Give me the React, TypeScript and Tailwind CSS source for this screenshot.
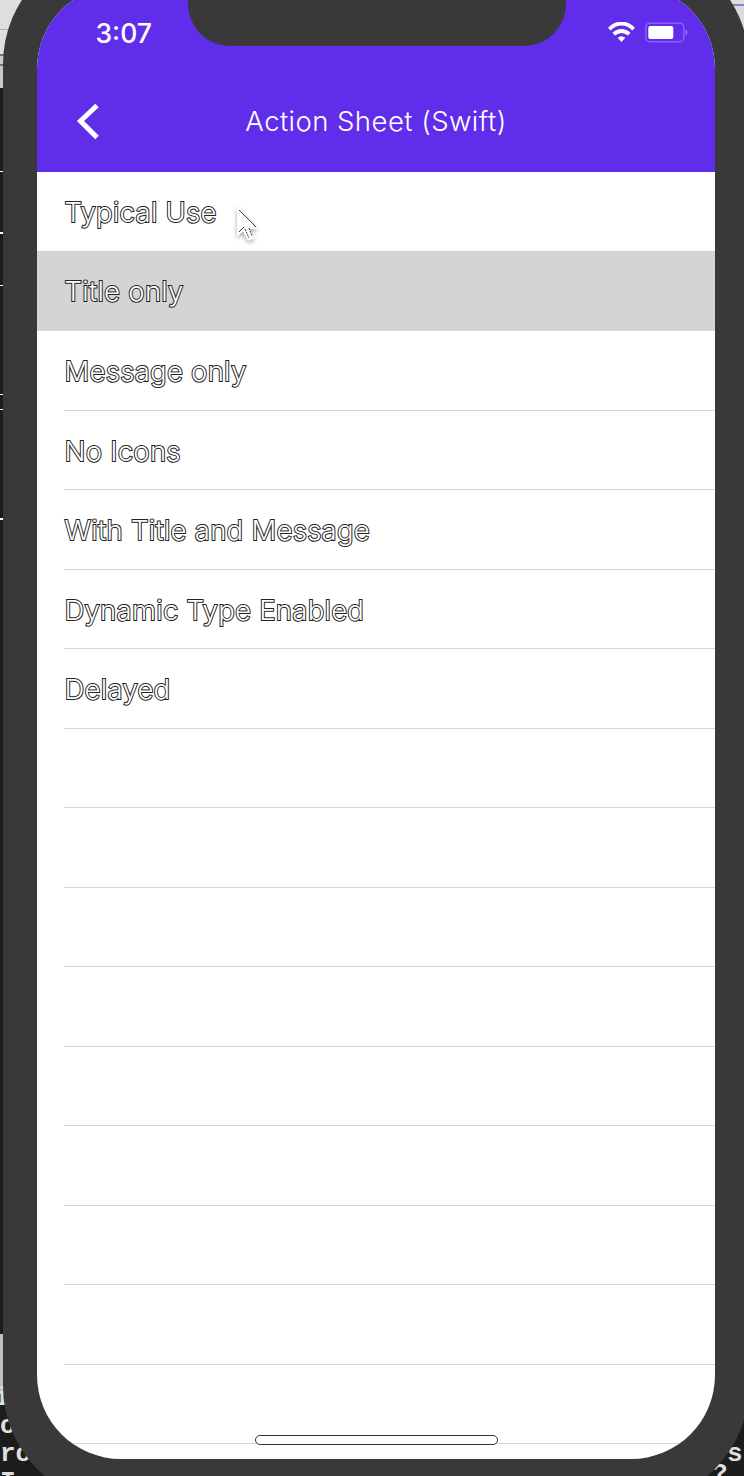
const rows = [
  'Typical Use',
  'Title only',
  'Message only',
  'No Icons',
  'With Title and Message',
  'Dynamic Type Enabled',
  'Delayed',
  '', '', '', '', '', '', '', '', '',
];

const rowClass = (i: number) => {
  if (i === 0) return 'h-[79px] pl-[27px]';
  if (i === 1) return 'h-[80px] bg-[#d4d4d4] pl-[27px]';
  return 'h-[79.5px] pl-[27px]';
};

function StatusBar() {
  return (
    <div className="flex h-[71px] items-start justify-between pl-[58.5px] pr-[27px]">
      <span className="pt-[18px] text-[26.5px] leading-[30px] font-medium text-white">3:07</span>
      <div className="flex items-start gap-[10px] pt-[22px]">
        <svg width="27" height="21" viewBox="0 0 27 21" fill="none" stroke="#fff" strokeWidth="3.8">
          <path d="M1.4 7.2C8-.3 19-.3 25.6 7.2" />
          <path d="M5.8 12.2C10.300 7.9 16.700 7.9 21.200 12.2" />
          <path d="M9.700 15.800Q13.500 12.500 17.300 15.800L13.500 20Z" fill="#fff" stroke="none" />
        </svg>
        <svg width="43" height="21" viewBox="0 0 43 21">
          <rect x=".8" y="1.200" width="38" height="18.500" rx="4" fill="none" stroke="#8f5bf6" strokeWidth="1.500" />
          <rect x="3.300" y="4" width="25" height="13" rx="2" fill="#fff" />
          <path d="M41 8q2 2.500 0 5z" fill="#9b6cf7" stroke="#9b6cf7" />
        </svg>
      </div>
    </div>
  );
}

function NavBar() {
  return (
    <div className="grid h-[101px] grid-cols-[100px_1fr_100px] pt-[30px]">
      <svg className="ml-[39px]" width="24" height="40" viewBox="0 0 24 40" fill="none" stroke="#fff" strokeWidth="5">
        <path d="M21 4.500 4.500 20 21 36.500" />
      </svg>
      <h1 className="text-center text-[27.5px] leading-[40px] font-light tracking-[0.45px] text-white">Action Sheet (Swift)</h1>
    </div>
  );
}

export default function App() {
  return (
    <div className="relative h-[1476px] w-[744px] overflow-hidden bg-[#1c1c1d] font-['Inter','Liberation_Sans',sans-serif]">
      <div className="flex h-full justify-between">
        <div className="flex w-[40px] flex-col *:shrink-0">
          <div className="h-[29px] bg-[#dedede]" />
          <div className="h-px bg-[#b0b0b0]" />
          <div className="h-[24px] bg-[#e0e0e0]" />
          <div className="h-[2px] bg-[#777]" />
          <div className="h-[8px] bg-[#ccc]" />
          <div className="h-[2px] bg-[#777]" />
          <div className="h-[22px] bg-[#c8c8c8]" />
          <div className="mt-[83px] h-px bg-white" />
          <div className="mt-[60px] h-[2px] bg-white" />
          <div className="mt-[51px] h-px bg-white" />
          <div className="mt-[108px] h-px bg-white" />
          <div className="mt-[14px] h-px bg-white" />
          <div className="mt-[108px] h-[2px] bg-white" />
          <div className="mt-[814px] h-[60px] bg-[#bfbfbf]" />
          <div className="-mt-[10px] font-['Liberation_Mono',monospace] text-[26px] leading-[28px] font-bold text-[#dedede]">
            <div className="-ml-1.5">i</div>
            <div>o</div>
            <div>ro</div>
            <div>I</div>
          </div>
        </div>
        <div className="flex w-[40px] flex-col *:shrink-0">
          <div className="h-[4px] bg-[#dedede]" />
          <div className="h-[2px] bg-[#8f7fd0]" />
          <div className="h-[24px] bg-[#dcdcdc]" />
          <div className="mt-[1410px] pl-[23px] font-['Liberation_Mono',monospace] text-[26px] leading-[28px] font-bold text-[#dedede]">
            <div>s</div>
            <div className="-mt-2 -ml-[15px]">?</div>
          </div>
        </div>
      </div>

      <div className="absolute -top-[54px] left-[3px] flex h-[1558px] w-[746px] rounded-[118px] bg-[#39393a] pt-[39px] pr-[34px] pb-[45px] pl-[34px]">
        <div className="relative flex flex-1 flex-col overflow-hidden rounded-[84px] bg-white">
          <header className="bg-[#602eea] pt-[15px]">
            <StatusBar />
            <NavBar />
          </header>
          <ul className="flex flex-col">
            {rows.map((label, i) => (
              <li key={i} className={rowClass(i)}>
                <div className={i < 2 ? 'h-full' : 'h-full border-b border-[#d5d5d7]'}>
                  <span className="block pl-[0.5px] text-[27.5px] leading-[80px] font-light tracking-[0.27px] whitespace-nowrap text-white [paint-order:stroke_fill] [-webkit-text-stroke:2px_#222]">
                    {label}
                  </span>
                </div>
              </li>
            ))}
          </ul>
          <div className="absolute bottom-[14px] left-[218px] h-[10px] w-[243px] rounded-full border border-[#333] bg-white" />
          <div className="absolute -top-px left-[151px] h-[62px] w-[378px] rounded-b-[42px] bg-[#39393a]" />
        </div>
      </div>

      <svg className="absolute top-[203px] left-[232px] drop-shadow-[0_2px_2px_rgba(0,0,0,0.35)]" width="32" height="44" viewBox="0 0 32 44">
        <path d="M5 3V34L11 28.500 16 38 22 35.500 18 26H26Z" fill="#fff" />
        <path d="M7 7 24 24M7 29 12 24" fill="none" stroke="#333" />
        <path d="M13 26l4 9M17 25l3 8" fill="none" stroke="#333" strokeDasharray="2 1" />
      </svg>
    </div>
  );
}
